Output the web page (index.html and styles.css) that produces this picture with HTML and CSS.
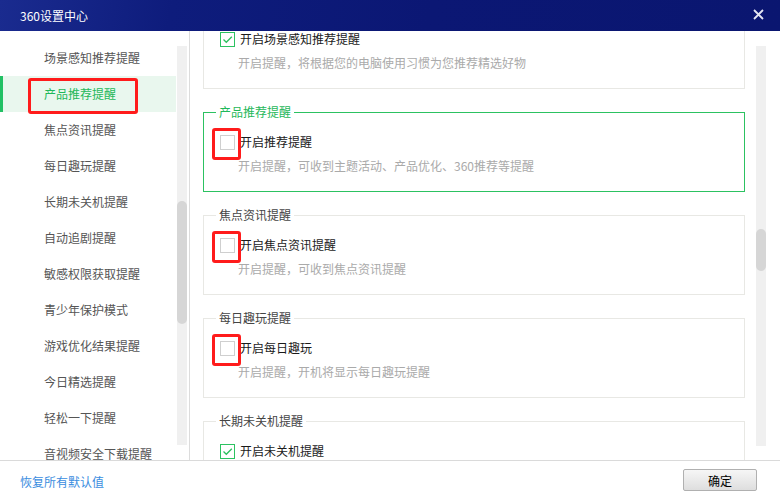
FILE: index.html
```html
<!DOCTYPE html>
<html lang="zh-CN">
<head>
<meta charset="utf-8">
<title>360设置中心</title>
<link rel="stylesheet" href="styles.css">
</head>
<body>
<div class="window">
  <header class="titlebar">
    <span class="title">360设置中心</span>
    <svg class="close" width="11" height="11" viewBox="0 0 11 11"><path d="M1 1 L10 10 M10 1 L1 10" stroke="#e4e6f2" stroke-width="1.8" fill="none"/></svg>
  </header>
  <div class="main">
    <aside class="sidebar">
      <ul class="nav">
        <li class="nav-item">场景感知推荐提醒</li>
        <li class="nav-item active"><span class="mark">产品推荐提醒</span></li>
        <li class="nav-item">焦点资讯提醒</li>
        <li class="nav-item">每日趣玩提醒</li>
        <li class="nav-item">长期未关机提醒</li>
        <li class="nav-item">自动追剧提醒</li>
        <li class="nav-item">敏感权限获取提醒</li>
        <li class="nav-item">青少年保护模式</li>
        <li class="nav-item">游戏优化结果提醒</li>
        <li class="nav-item">今日精选提醒</li>
        <li class="nav-item">轻松一下提醒</li>
        <li class="nav-item">音视频安全下载提醒</li>
      </ul>
      <div class="track side-track"><div class="thumb side-thumb"></div></div>
    </aside>
    <section class="content">
      <div class="groups">
        <div class="group first">
          <div class="group-title">场景感知推荐提醒</div>
          <div class="check-row"><span class="cb checked"><svg width="13" height="13" viewBox="0 0 13 13"><path d="M2.5 6.5 L5.3 9.3 L10.8 3.8" stroke="#2cc05e" stroke-width="1.3" fill="none"/></svg></span><span class="label">开启场景感知推荐提醒</span></div>
          <div class="desc">开启提醒，将根据您的电脑使用习惯为您推荐精选好物</div>
        </div>
        <div class="group green">
          <div class="group-title">产品推荐提醒</div>
          <div class="check-row"><span class="cb"><span class="red-mark"></span></span><span class="label">开启推荐提醒</span></div>
          <div class="desc">开启提醒，可收到主题活动、产品优化、360推荐等提醒</div>
        </div>
        <div class="group">
          <div class="group-title">焦点资讯提醒</div>
          <div class="check-row"><span class="cb"><span class="red-mark"></span></span><span class="label">开启焦点资讯提醒</span></div>
          <div class="desc">开启提醒，可收到焦点资讯提醒</div>
        </div>
        <div class="group">
          <div class="group-title">每日趣玩提醒</div>
          <div class="check-row"><span class="cb"><span class="red-mark"></span></span><span class="label">开启每日趣玩</span></div>
          <div class="desc">开启提醒，开机将显示每日趣玩提醒</div>
        </div>
        <div class="group">
          <div class="group-title">长期未关机提醒</div>
          <div class="check-row"><span class="cb checked"><svg width="13" height="13" viewBox="0 0 13 13"><path d="M2.5 6.5 L5.3 9.3 L10.8 3.8" stroke="#2cc05e" stroke-width="1.3" fill="none"/></svg></span><span class="label">开启未关机提醒</span></div>
          <div class="desc">开启提醒，长期未关机时将提醒您关机休息</div>
        </div>
      </div>
      <div class="track main-track"><div class="thumb main-thumb"></div></div>
    </section>
  </div>
  <footer class="footer">
    <a class="reset">恢复所有默认值</a>
    <button class="ok">确定</button>
  </footer>
</div>
</body>
</html>
```

FILE: styles.css
```css
* { box-sizing: border-box; }
html, body { margin: 0; padding: 0; }
body {
  width: 780px;
  height: 500px;
  overflow: hidden;
  background: #fff;
  font-family: "Noto Sans CJK SC", "Liberation Sans", sans-serif;
  font-size: 12px;
}
.window { width: 780px; height: 500px; display: flex; flex-direction: column; }

.titlebar {
  height: 31px;
  flex: none;
  display: flex;
  align-items: center;
  justify-content: space-between;
  padding: 0 16px 0 20px;
  background: linear-gradient(100deg, #1a2b8f 0%, #0e1c7c 22%, #0b1774 55%, #0a1670 100%);
  color: #fff;
}
.title { font-size: 12px; line-height: 16px; letter-spacing: 0; }
.close { display: block; margin-top: -3px; }

.main { height: 429px; flex: none; display: flex; overflow: hidden; }

.sidebar {
  width: 190px;
  flex: none;
  display: flex;
  border-right: 1px solid #dcdcdc;
  padding-right: 2px;
}
.nav {
  list-style: none;
  margin: 0;
  padding: 9px 0 0 0;
  width: 176px;
  flex: none;
  overflow: hidden;
}
.nav-item {
  height: 36px;
  line-height: 36px;
  padding-left: 44px;
  color: #555;
  white-space: nowrap;
}
.nav-item.active {
  background: #e9f7ee;
  color: #1fb85a;
  box-shadow: inset 3px 0 0 #22c064;
  display: flex;
  align-items: center;
}
.mark { position: relative; display: block; line-height: 18px; }
.mark::after {
  content: "";
  position: absolute;
  left: -16px;
  top: -7px;
  width: 104px;
  height: 30px;
  border: 3px solid #ff1b1b;
  border-radius: 3px;
}

.track {
  width: 10px;
  flex: none;
  background: #f0f0f0;
  margin-left: 1px;
}
.side-track { margin-top: 15px; height: 399px; }
.side-thumb { margin-top: 155px; height: 123px; }
.thumb { background: #d6d6d6; border-radius: 5px; width: 10px; }

.content {
  flex: 1;
  display: flex;
  padding-left: 13px;
  overflow: hidden;
}
.groups { width: 542px; flex: none; }
.main-track { margin-left: 11px; margin-top: 15px; height: 400px; }
.main-thumb { margin-top: 183px; height: 42px; }

.group {
  height: 80px;
  border: 1px solid #e8e8e4;
  margin-top: 23px;
  padding-left: 16px;
}
.group.first { margin-top: -22px; }
.group.green { border-color: #2cc261; }
.group-title {
  display: block;
  width: max-content;
  background: #fff;
  padding: 0 3px;
  margin: -10px 0 0 -4px;
  line-height: 18px;
  height: 18px;
  color: #444;
}
.group.green .group-title { color: #1fb85a; }

.check-row {
  display: flex;
  align-items: center;
  height: 16px;
  margin-top: 13px;
}
.cb {
  position: relative;
  width: 15px;
  height: 15px;
  border: 1px solid #cfcfcf;
  background: #fff;
  flex: none;
  display: flex;
  align-items: center;
  justify-content: center;
}
.cb.checked { border-color: #2cc261; }
.red-mark {
  position: absolute;
  left: -9px;
  top: -8px;
  width: 29px;
  height: 32px;
  border: 3px solid #ff1b1b;
  border-radius: 3px;
}
.label { margin-left: 5px; color: #1a1a1a; line-height: 16px; }
.desc {
  margin-top: 8px;
  padding-left: 18px;
  line-height: 16px;
  color: #aaa;
  white-space: nowrap;
}

.footer {
  height: 40px;
  flex: none;
  border-top: 1px solid #dadada;
  display: flex;
  align-items: center;
  justify-content: space-between;
  padding: 0 23px 0 20px;
}
.reset { color: #3a8de0; line-height: 16px; margin-top: 3px; cursor: pointer; }
.ok {
  width: 74px;
  height: 22px;
  border: 1px solid #b0b0b0;
  border-radius: 2px;
  background: linear-gradient(#f6f6f6, #dedede);
  font-family: "Noto Sans CJK SC", "Liberation Sans", sans-serif;
  font-size: 12px;
  color: #000;
  padding: 0;
  margin-top: -1px;
}
```
